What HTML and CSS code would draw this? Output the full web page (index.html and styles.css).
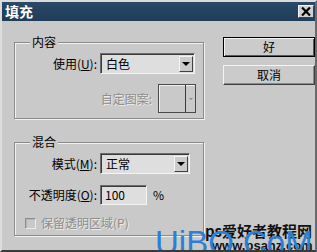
FILE: index.html
```html
<!DOCTYPE html>
<html lang="zh">
<head>
<meta charset="utf-8">
<title>填充</title>
<link rel="stylesheet" href="styles.css">
</head>
<body>
<div class="window">
  <div class="titlebar">
    <span class="title">填充</span>
    <span class="close"><svg width="10" height="9" viewBox="0 0 10 9"><path d="M1 0.5 L9 8.5 M9 0.5 L1 8.5" stroke="#000" stroke-width="2.2"/></svg></span>
  </div>
  <div class="body">
    <div class="groups">
      <div class="group g1">
        <div class="legend">内容</div>
        <div class="grid">
          <span class="label">使用(<u>U</u>):</span>
          <div class="select s1"><span class="value">白色</span><span class="arrow"><i></i></span></div>
        </div>
        <div class="pattern-row">
          <span class="label disabled">自定图案:</span>
          <div class="pattern"><span class="swatch"></span><span class="parrow"><i></i></span></div>
        </div>
      </div>
      <div class="group g2">
        <div class="legend">混合</div>
        <div class="grid grid2">
          <span class="label">模式(<u>M</u>):</span>
          <div class="select s2"><span class="value">正常</span><span class="arrow"><i></i></span></div>
          <span class="label">不透明度(<u>O</u>):</span>
          <div class="opacity"><span class="input">100</span><span class="pct">%</span></div>
        </div>
        <div class="check-row">
          <span class="checkbox"></span>
          <span class="disabled">保留透明区域(P)</span>
        </div>
      </div>
    </div>
    <div class="buttons">
      <div class="btn default">好</div>
      <div class="btn">取消</div>
    </div>
  </div>
  <div class="wm wm-cn">ps爱好者教程网</div>
  <div class="wm wm-url">www.psahz.com</div>
  <div class="wm wm-logo">UiBQ.CoM</div>
</div>
</body>
</html>
```
FILE: styles.css
```css
html, body {
  margin: 0;
  padding: 0;
  background: #c9c9c9;
}
body {
  font-family: "Noto Sans CJK SC", "Noto Sans", sans-serif;
  font-size: 12px;
  color: #000;
}
.window {
  position: relative;
  width: 317px;
  height: 252px;
  box-sizing: border-box;
  overflow: hidden;
  background: #c9c9c9;
  border-top: 2px solid #dcdcdc;
  border-left: 2px solid #dcdcdc;
  border-right: 2px solid #6a6a6a;
  border-bottom: 2px solid #3a3a3a;
}
.titlebar {
  height: 19px;
  background: linear-gradient(#2b4a69, #1f3c58);
  display: flex;
  align-items: center;
  justify-content: space-between;
  padding: 0 1px 0 3px;
}
.title {
  color: #fff;
  font-weight: bold;
  font-size: 14px;
  line-height: 15px;
}
.close {
  width: 16px;
  height: 13px;
  box-sizing: border-box;
  background: #d0d0d0;
  border-top: 1px solid #f4f4f4;
  border-left: 1px solid #f4f4f4;
  border-right: 1px solid #404040;
  border-bottom: 1px solid #404040;
  display: flex;
  align-items: center;
  justify-content: center;
}
.body {
  display: flex;
  padding: 16px 0 0 12px;
}
.groups {
  width: 190px;
  padding-top: 5px;
}
.group {
  border: 1px solid #8a8a8a;
  box-shadow: 1px 1px 0 #f2f2f2, inset 1px 1px 0 #f2f2f2;
  box-sizing: border-box;
}
.g1 {
  height: 77px;
}
.g2 {
  margin-top: 23px;
  height: 94px;
}
.legend {
  width: max-content;
  margin: -8px 0 0 15px;
  padding: 0 2px;
  line-height: 14px;
  background: #c9c9c9;
}
.grid {
  display: grid;
  grid-template-columns: 82px auto;
  column-gap: 3px;
  align-items: center;
  margin-top: 4px;
}
.grid2 {
  row-gap: 11px;
}
.label {
  text-align: right;
  white-space: nowrap;
  line-height: 14px;
}
.label u {
  text-decoration: underline;
  text-underline-offset: 1px;
}
.disabled {
  color: #8e8e8e;
  text-shadow: 1px 1px 0 #ececec;
}
.select {
  height: 21px;
  box-sizing: border-box;
  background: #dedede;
  border-top: 1px solid #6c6c6c;
  border-left: 1px solid #6c6c6c;
  border-right: 1px solid #f4f4f4;
  border-bottom: 1px solid #f4f4f4;
  box-shadow: inset 1px 1px 0 #3a3a3a;
  display: flex;
  align-items: center;
  justify-content: space-between;
  padding: 2px 1px 1px 5px;
}
.s1 { width: 95px; }
.s2 { width: 90px; }
.value {
  line-height: 14px;
}
.arrow {
  width: 14px;
  height: 16px;
  box-sizing: border-box;
  background: #cbcbcb;
  border-top: 1px solid #f4f4f4;
  border-left: 1px solid #f4f4f4;
  border-right: 1px solid #404040;
  border-bottom: 1px solid #404040;
  display: flex;
  align-items: center;
  justify-content: center;
}
.arrow i {
  width: 0;
  height: 0;
  border-left: 4px solid transparent;
  border-right: 4px solid transparent;
  border-top: 4px solid #000;
}
.pattern-row {
  display: flex;
  justify-content: flex-end;
  align-items: center;
  gap: 6px;
  margin-top: 10px;
  padding-right: 7px;
}
.pattern {
  width: 38px;
  height: 29px;
  box-sizing: border-box;
  border: 1px solid #4a4a4a;
  box-shadow: inset 1px 1px 0 #f0f0f0;
  display: flex;
}
.swatch {
  width: 26px;
  border-right: 1px solid #3a3a3a;
}
.parrow {
  flex: 1;
  display: flex;
  align-items: center;
  justify-content: center;
}
.parrow i {
  width: 0;
  height: 0;
  border-left: 2px solid transparent;
  border-right: 2px solid transparent;
  border-top: 2px solid #8a8a8a;
}
.opacity {
  display: flex;
  align-items: center;
  gap: 6px;
}
.input {
  width: 47px;
  height: 20px;
  box-sizing: border-box;
  background: #dedede;
  border-top: 1px solid #6c6c6c;
  border-left: 1px solid #6c6c6c;
  border-right: 1px solid #f4f4f4;
  border-bottom: 1px solid #f4f4f4;
  box-shadow: inset 1px 1px 0 #3a3a3a;
  padding: 2px 0 0 4px;
  line-height: 14px;
}
.pct {
  line-height: 14px;
}
.check-row {
  display: flex;
  align-items: center;
  gap: 5px;
  margin-top: 11px;
  padding-left: 10px;
  line-height: 14px;
}
.checkbox {
  width: 11px;
  height: 11px;
  box-sizing: border-box;
  border-top: 1px solid #8e8e8e;
  border-left: 1px solid #8e8e8e;
  border-right: 1px solid #ececec;
  border-bottom: 1px solid #ececec;
  box-shadow: inset 1px 1px 0 #b4b4b4;
}
.buttons {
  margin-left: 19px;
  display: flex;
  flex-direction: column;
  gap: 8px;
}
.btn {
  width: 92px;
  height: 20px;
  box-sizing: border-box;
  background: #cbcbcb;
  border-top: 1px solid #f4f4f4;
  border-left: 1px solid #f4f4f4;
  border-right: 1px solid #404040;
  border-bottom: 1px solid #404040;
  box-shadow: inset -1px -1px 0 #8a8a8a;
  display: flex;
  align-items: center;
  justify-content: center;
  line-height: 14px;
}
.btn.default {
  border: 1px solid #000;
  box-shadow: inset 1px 1px 0 #f4f4f4, inset -1px -1px 0 #5a5a5a;
}
.wm {
  position: absolute;
  white-space: nowrap;
}
.wm-cn {
  left: 203px;
  top: 220px;
  font-size: 15px;
  font-weight: bold;
  line-height: 18px;
  color: #111;
}
.wm-url {
  left: 210px;
  top: 237px;
  font-family: "Liberation Sans", Arial, sans-serif;
  font-size: 13px;
  font-weight: bold;
  line-height: 14px;
  color: #111;
}
.wm-logo {
  left: 153px;
  top: 223px;
  font-family: "Liberation Sans", Arial, sans-serif;
  font-size: 33px;
  line-height: 36px;
  color: #2b7fd6;
}
```
